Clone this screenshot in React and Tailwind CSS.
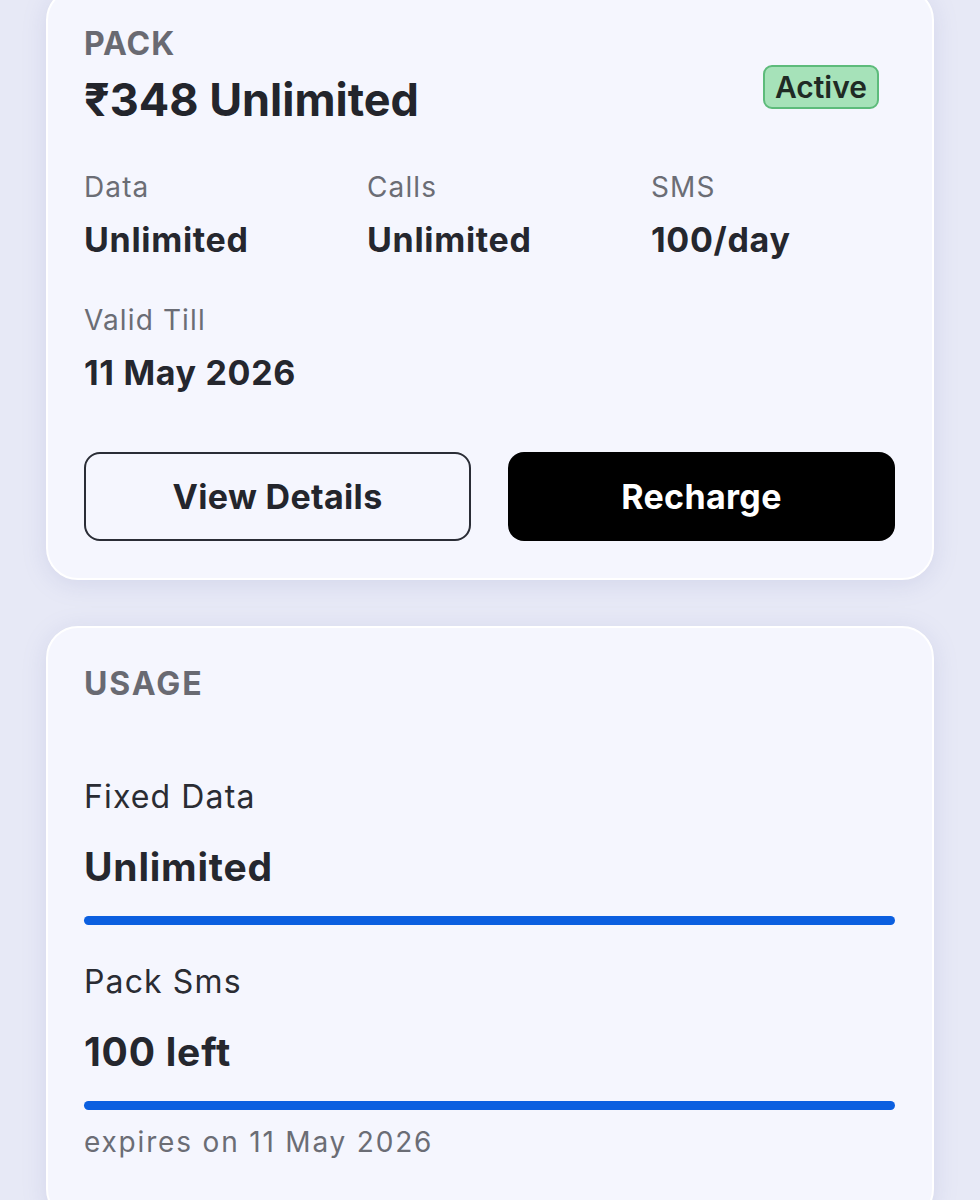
import React from 'react';

const font = { fontFamily: 'Inter, "Noto Sans", sans-serif' };

function Stat({ label, value }) {
  return (
    <div className="flex flex-col">
      <span className="text-[28px] leading-[34px] tracking-[0.04em] text-[#6b6d75]">{label}</span>
      <span className="mt-[16px] text-[34px] leading-[40px] tracking-[0.02em] font-bold text-[#25272e]">{value}</span>
    </div>
  );
}

function UsageRow({ label, value }) {
  return (
    <div className="flex flex-col">
      <span className="text-[32px] leading-[40px] tracking-[0.035em] text-[#2a2c33]">{label}</span>
      <span className="mt-[28px] text-[39px] leading-[44px] tracking-[0.02em] font-bold text-[#25272e]">{value}</span>
      <div className="mt-[27px] h-[9px] w-full rounded-full bg-[#0b5fe0]" />
    </div>
  );
}

export default function App() {
  return (
    <div className="h-[1200px] overflow-hidden bg-[#e7e9f6] px-[46px]" style={font}>
      <div className="-mt-[12px] rounded-[32px] border-2 border-white bg-[#f5f6fe] pl-[36px] pr-[37px] pt-[36px] pb-[37px] shadow-[0_4px_24px_rgba(120,130,190,0.18)]">
        <div className="flex items-start justify-between">
          <div className="flex flex-col">
            <span className="text-[32px] leading-[36px] tracking-[0.03em] font-bold text-[#696a72]">PACK</span>
            <span className="mt-[12px] text-[45px] leading-[52px] font-bold text-[#23252c]">₹348 Unlimited</span>
          </div>
          <span className="mt-[39px] mr-[16px] rounded-[9px] border-2 border-[#5dbb7b] bg-[#a6e2b9] px-[10px] py-[2px] text-[30px] leading-[36px] font-semibold text-[#1f2a24]">
            Active
          </span>
        </div>

        <div className="mt-[44px] grid grid-cols-[283px_284px_1fr]">
          <Stat label="Data" value="Unlimited" />
          <Stat label="Calls" value="Unlimited" />
          <Stat label="SMS" value="100/day" />
        </div>
        <div className="mt-[43px]">
          <Stat label="Valid Till" value="11 May 2026" />
        </div>

        <div className="mt-[59px] grid grid-cols-2 gap-[37px]">
          <button className="h-[89px] rounded-[16px] border-2 border-[#2a2d36] bg-transparent text-[34px] tracking-[0.01em] font-bold text-[#23252c]">
            View Details
          </button>
          <button className="h-[89px] rounded-[16px] bg-black text-[34px] tracking-[0.01em] font-bold text-white">
            Recharge
          </button>
        </div>
      </div>

      <div className="mt-[46px] rounded-[32px] border-2 border-white bg-[#f5f6fe] pl-[36px] pr-[37px] pt-[36px] pb-[60px] shadow-[0_4px_24px_rgba(120,130,190,0.18)]">
        <span className="block text-[32px] leading-[40px] tracking-[0.06em] font-bold text-[#696a72]">USAGE</span>
        <div className="mt-[73px] flex flex-col gap-[37px]">
          <UsageRow label="Fixed Data" value="Unlimited" />
          <UsageRow label="Pack Sms" value="100 left" />
        </div>
        <span className="mt-[15px] block text-[28px] leading-[34px] tracking-[0.065em] text-[#6b6d75]">expires on 11 May 2026</span>
      </div>
    </div>
  );
}
